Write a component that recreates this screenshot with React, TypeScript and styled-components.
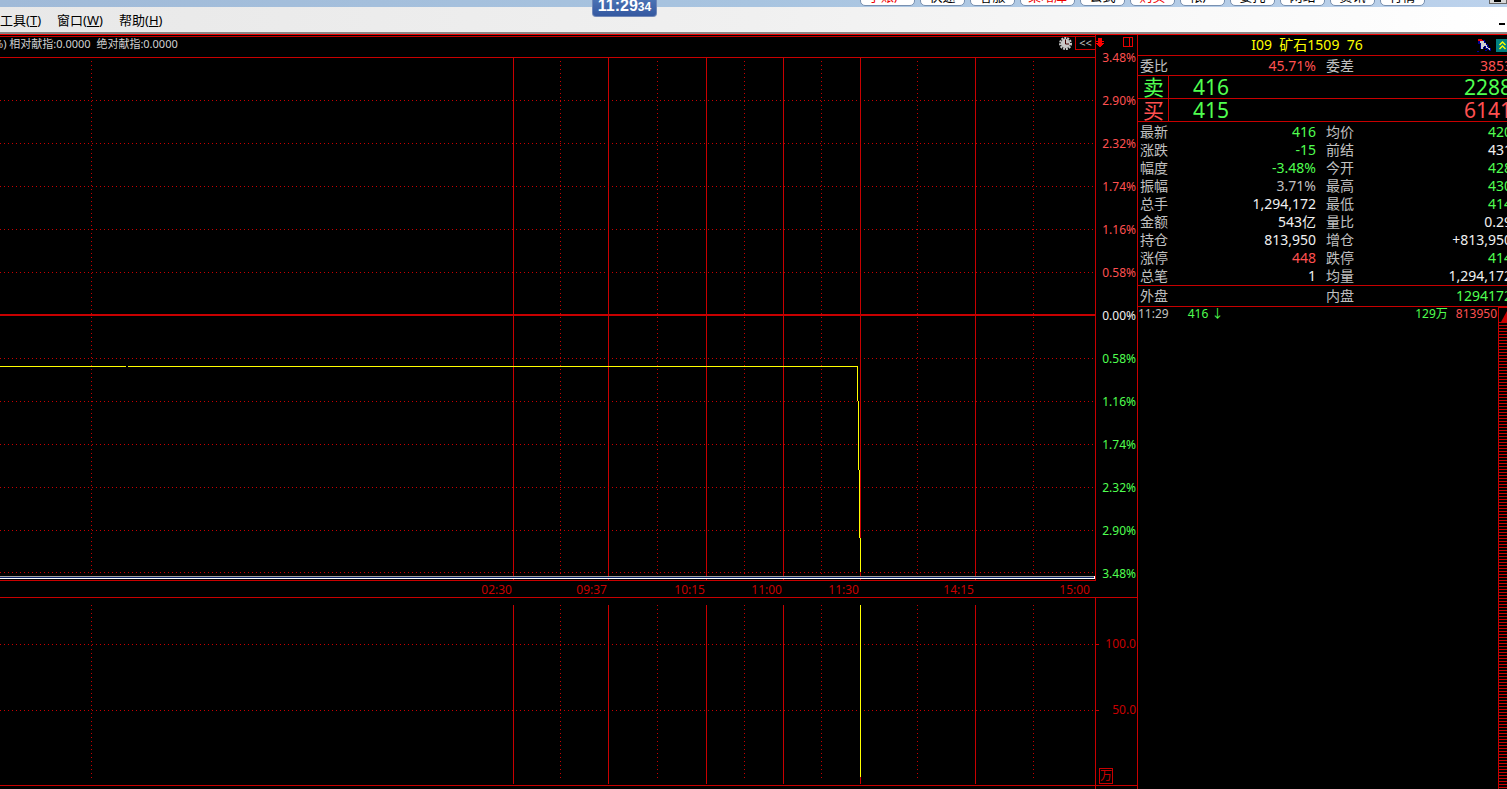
import React from 'react';
import styled, { createGlobalStyle } from 'styled-components';

const RED = '#c80000';
const UP = '#ff5050';
const DOWN = '#50ff50';
const LABEL = '#c0c0c0';
const PLAIN = '#f0f0f0';

const GlobalStyle = createGlobalStyle`
  * { box-sizing: border-box; }
  body {
    margin: 0;
    background: #000;
    overflow: hidden;
    font-family: "Noto Sans", "Noto Sans CJK SC", sans-serif;
  }
  button { font-family: inherit; padding: 0; border: 0; background: none; }
`;

const Page = styled.div`
  display: flex;
  flex-direction: column;
  min-height: 100vh;
  overflow: hidden;
`;

/* ---------- window chrome ---------- */

const TitleStrip = styled.header`
  position: relative;
  display: flex;
  justify-content: flex-end;
  align-items: flex-end;
  gap: 5px;
  height: 7px;
  padding: 0 82px 1px 0;
  background: linear-gradient(90deg, #a0bad8, #a8c4e0 50%, #bcd2ec);
`;

const QuickButton = styled.button<{ $wide?: boolean; $hot?: boolean }>`
  flex: none;
  width: ${(p) => (p.$wide ? 55 : 45)}px;
  height: 20px;
  border: 1px solid #7890b0;
  border-radius: 5px;
  background: #fff;
  color: ${(p) => (p.$hot ? '#f00000' : '#000')};
  font-size: 13px;
  line-height: 18px;
  text-align: center;
`;

const MinimizeCorner = styled.button`
  position: absolute;
  right: 0;
  bottom: 3px;
  width: 18px;
  height: 16px;
  border: 1px solid #666;
  background: #d8d8d8;
  &::after {
    content: '';
    position: absolute;
    left: 4px;
    bottom: 1px;
    width: 7px;
    height: 3px;
    background: #000;
  }
`;

const ClockWidget = styled.time`
  position: absolute;
  z-index: 2;
  left: 592px;
  top: 0;
  display: flex;
  align-items: flex-end;
  justify-content: center;
  width: 65px;
  height: 17px;
  padding-bottom: 3px;
  overflow: hidden;
  border: 1px solid #7088b8;
  border-top: 0;
  border-radius: 0 0 4px 4px;
  background: linear-gradient(#4a72b4, #3458a0);
  color: #fff;
  font-family: "Liberation Sans", sans-serif;
  font-weight: bold;
  font-size: 16px;
  line-height: 14px;
`;

const ClockSeconds = styled.span`
  font-size: 12px;
  line-height: 12px;
`;

const MenuBar = styled.nav`
  display: flex;
  align-items: center;
  gap: 16px;
  height: 25px;
  padding-right: 2px;
  background: linear-gradient(90deg, #e8e8e8, #f0f0f0 50%, #fff);
`;

const MenuItem = styled.button`
  color: #000;
  font-size: 13px;
  line-height: 18px;
  white-space: nowrap;
`;

const ChildMinimize = styled.button`
  width: 6px;
  height: 2px;
  margin: 8px 0 0 auto;
  background: #000;
`;

const ChromeEdge = styled.div`
  height: 3px;
  border-bottom: 1px solid #f00000;
  background: #888;
`;

/* ---------- workspace ---------- */

const Workspace = styled.main`
  display: flex;
  flex: 1;
  background: #000;
`;

const ChartSide = styled.section`
  display: flex;
  flex-direction: column;
  flex: 1;
  min-width: 0;
  border-right: 1px solid ${RED};
`;

const Pane = styled.div`
  display: flex;
`;

const PriceColumn = styled.div`
  flex: 1;
  min-width: 0;
  margin-top: 1px;
  border-top: 1px solid ${RED};
  border-bottom: 1px solid ${RED};
`;

const InfoBar = styled.div`
  display: flex;
  height: 21px;
  border-bottom: 1px solid ${RED};
  color: #d0d0d0;
  font-size: 11px;
  line-height: 14px;
  white-space: pre;
  overflow: hidden;
`;

const InfoText = styled.span`
  margin-left: -6px;
`;

const InfoTools = styled.div`
  display: flex;
  gap: 3px;
  height: 13px;
  margin-left: auto;
`;

const CollapseButton = styled.button`
  width: 20px;
  height: 13px;
  border-left: 1px solid ${RED};
  border-bottom: 1px solid ${RED};
  color: #c0c0c0;
  font-size: 11px;
  line-height: 12px;
`;

const IconButton = styled.button`
  display: block;
  line-height: 0;
`;

const Graph = styled.svg<{ $h: number }>`
  display: block;
  width: 100%;
  height: ${(p) => p.$h}px;
`;

const Axis = styled.aside`
  display: flex;
  flex-direction: column;
  flex: none;
  width: 42px;
  border-left: 1px solid ${RED};
`;

const AxisTools = styled.div`
  display: flex;
  align-items: flex-start;
  justify-content: space-between;
  height: 16px;
  padding: 2px 4px 0 0;
`;

const PercentScale = styled.div`
  display: flex;
  flex: 1;
  flex-direction: column;
  justify-content: space-between;
  padding-right: 1px;
  text-align: right;
  font-size: 12px;
  line-height: 14px;
`;

const Tone = styled.span<{ $c: string }>`
  color: ${(p) => p.$c};
`;

const TimeRow = styled.div`
  display: flex;
  height: 17px;
  padding-right: 47px;
  border-bottom: 1px solid ${RED};
  color: ${RED};
  font-size: 12px;
  line-height: 18px;
  text-align: right;
`;

const TimeMark = styled.span<{ $w: number }>`
  flex: ${(p) => p.$w} 1 0;
`;

const VolumePane = styled(Pane)`
  border-bottom: 1px solid ${RED};
`;

const VolumeColumn = styled.div`
  flex: 1;
  min-width: 0;
`;

const VolumeScale = styled(Axis)`
  padding-top: 39px;
  color: ${RED};
  font-size: 12px;
  line-height: 16px;
`;

const VolumeMark = styled.div`
  display: flex;
  align-items: center;
  justify-content: space-between;
  height: 14px;
  padding-right: 1px;
  & + & {
    margin-top: 52px;
  }
  &::before {
    content: '';
    width: 3px;
    height: 1px;
    background: ${RED};
  }
`;

const UnitBox = styled.div`
  width: 14px;
  height: 16px;
  margin: auto 0 1px 3px;
  border: 1px solid ${RED};
  font-size: 12px;
  line-height: 14px;
  text-align: center;
`;

const Footer = styled.div`
  flex: 1;
  width: calc(100% - 41px);
  border-right: 1px solid ${RED};
`;

/* ---------- quote panel ---------- */

const QuoteSide = styled.section`
  display: flex;
  flex-direction: column;
  flex: none;
  width: 369px;
  overflow: hidden;
`;

const QuoteTitle = styled.div`
  display: flex;
  align-items: center;
  height: 21px;
  border-bottom: 1px solid ${RED};
`;

const QuoteName = styled.h1`
  flex: 1;
  margin: 0;
  color: #ffff00;
  font-size: 14px;
  font-weight: 400;
  line-height: 20px;
  text-align: center;
  white-space: pre;
`;

const TitleTools = styled.div`
  display: flex;
  flex: none;
  gap: 4px;
  width: 31px;
`;

const Stats = styled.table<{ $pad?: number }>`
  flex: none;
  width: 374px;
  table-layout: fixed;
  border-spacing: 0;
  font-size: 14px;
  border-bottom: 1px solid ${RED};
  padding-top: ${(p) => p.$pad ?? 0}px;
`;

const StatRow = styled.tr<{ $h: number }>`
  height: ${(p) => p.$h}px;
  line-height: ${(p) => p.$h}px;
`;

const StatLabel = styled.th<{ $second?: boolean }>`
  width: ${(p) => (p.$second ? 40 : 38)}px;
  padding: 0 0 0 ${(p) => (p.$second ? 10 : 2)}px;
  color: ${LABEL};
  font-weight: 400;
  text-align: left;
  white-space: nowrap;
`;

const StatValue = styled.td<{ $c: string; $first?: boolean }>`
  width: ${(p) => (p.$first ? '140px' : 'auto')};
  padding: 0;
  color: ${(p) => p.$c};
  text-align: right;
  white-space: nowrap;
`;

const DealRow = styled.div`
  display: flex;
  flex: none;
  width: 374px;
  height: 23px;
  border-bottom: 1px solid ${RED};
  font-size: 21px;
  line-height: 22px;
`;

const DealSide = styled.span<{ $c: string }>`
  width: 31px;
  padding-left: 5px;
  border-right: 1px solid ${RED};
  color: ${(p) => p.$c};
`;

const DealPrice = styled.span`
  flex: 1;
  padding-left: 24px;
  color: ${DOWN};
`;

const TickArea = styled.div`
  display: flex;
  flex: 1;
`;

const TickRow = styled.div`
  display: flex;
  flex: 1;
  height: 16px;
  color: ${LABEL};
  font-size: 12px;
  line-height: 14px;
`;

const TickPrice = styled.span`
  flex: 1;
  padding-left: 19px;
  color: ${DOWN};
  white-space: pre;
`;

const TickVolume = styled.span`
  padding-right: 8px;
  color: ${DOWN};
`;

const TickOpen = styled.span`
  padding-right: 1px;
  color: ${UP};
`;

const ScrollTrack = styled.div`
  display: flex;
  flex-direction: column;
  width: 9px;
  overflow: hidden;
  border-left: 1px solid ${RED};
`;

const ScrollUp = styled.button`
  height: 15px;
  padding: 2px 0 0 2px;
  border-top: 1px solid ${RED};
  line-height: 0;
`;

const ScrollStripes = styled.div`
  flex: 1;
  background: repeating-linear-gradient(${RED} 0 1px, #000 1px 3px);
`;

/* ---------- data ---------- */

const quick: [string, boolean, boolean][] = [
  ['子账户', true, true],
  ['快速', false, false],
  ['客服', false, false],
  ['策略库', true, true],
  ['公式', false, false],
  ['购买', false, true],
  ['帐户', false, false],
  ['委托', false, false],
  ['网站', false, false],
  ['资讯', false, false],
  ['行情', false, false],
];

const menus = [
  ['工具', 'T'],
  ['窗口', 'W'],
  ['帮助', 'H'],
];

const solidX = [513, 608, 706, 783, 860, 975];
const dottedX = [91, 560, 657, 744, 821, 917, 1033];
const levels = [42, 85, 128, 171, 214, 300, 343, 386, 429, 472, 514];

const percents = ['3.48%', '2.90%', '2.32%', '1.74%', '1.16%', '0.58%', '0.00%',
  '0.58%', '1.16%', '1.74%', '2.32%', '2.90%', '3.48%'];

const times: [string, number][] = [
  ['02:30', 512], ['09:37', 95], ['10:15', 98], ['11:00', 77],
  ['11:30', 77], ['14:15', 115], ['15:00', 116],
];

const stats: [string, string, string, string, string, string][] = [
  ['最新', '416', DOWN, '均价', '420', DOWN],
  ['涨跌', '-15', DOWN, '前结', '431', PLAIN],
  ['幅度', '-3.48%', DOWN, '今开', '428', DOWN],
  ['振幅', '3.71%', LABEL, '最高', '430', DOWN],
  ['总手', '1,294,172', PLAIN, '最低', '414', DOWN],
  ['金额', '543亿', PLAIN, '量比', '0.29', PLAIN],
  ['持仓', '813,950', PLAIN, '增仓', '+813,950', PLAIN],
  ['涨停', '448', UP, '跌停', '414', DOWN],
  ['总笔', '1', PLAIN, '均量', '1,294,172', PLAIN],
];

/* ---------- drawings ---------- */

function VerticalRules({ top, bottom, dotTop }: { top: number; bottom: number; dotTop: number }) {
  return (
    <g>
      {dottedX.map((x) => (
        <path key={x} d={`M${x + 0.5} ${dotTop}V${bottom - 3}`} stroke={RED} strokeDasharray="1 3" />
      ))}
      {solidX.map((x) => (
        <path key={x} d={`M${x + 0.5} ${top}V${bottom}`} stroke={RED} />
      ))}
    </g>
  );
}

function PriceGraph() {
  return (
    <Graph $h={522} viewBox="0 0 1095 522" preserveAspectRatio="none" shapeRendering="crispEdges" fill="none">
      {levels.map((y) => (
        <path key={y} d={`M0 ${y + 0.5}H1095`} stroke={RED} strokeDasharray="1 3" />
      ))}
      <VerticalRules top={0} bottom={522} dotTop={3} />
      <path d="M0 257H1095" stroke={RED} strokeWidth="2" />
      <path
        d="M0 308.5H126M128 308.5H858M857.5 308V343M858.5 343V412M859.5 412V480M860.5 480V514"
        stroke="#ffff00"
      />
      <path d="M0 518.5H1095" stroke="#a0a0a0" />
      <path d="M0 519.5H1095" stroke="#0a246a" />
      <path d="M0 520.5H1095M1094.5 518V521" stroke="#fff" />
    </Graph>
  );
}

function VolumeGraph() {
  return (
    <Graph $h={187} viewBox="0 0 1095 187" preserveAspectRatio="none" shapeRendering="crispEdges" fill="none">
      <path d="M0 46.5H1095M0 112.5H1095" stroke={RED} strokeDasharray="1 3" />
      <VerticalRules top={7} bottom={186} dotTop={7} />
      <path d="M860.5 7V179" stroke="#ffff00" />
    </Graph>
  );
}

function ClockIcon() {
  return (
    <svg width="13" height="13" viewBox="0 0 13 13">
      <circle cx="6.5" cy="6.5" r="5.5" fill="none" stroke="#c8c8c8" strokeWidth="2" strokeDasharray="2 1" />
      <circle cx="6.5" cy="6.5" r="4.7" fill="#c8c8c8" />
      <path d="M6.5 2.5V7H10" fill="none" stroke="#400000" strokeWidth="1" />
    </svg>
  );
}

function AnchorIcon() {
  return (
    <svg width="9" height="10" viewBox="0 0 9 10" shapeRendering="crispEdges" fill="#ff0000">
      <path d="M2 1h4v3h2v1h-2v1h2v1h-1v1h-1v1h-1v1h-2v-1h-1v-1h-1v-1h-1v-1h2v-1h-2v-1h2z" />
    </svg>
  );
}

function SplitIcon() {
  return (
    <svg width="10" height="10" viewBox="0 0 10 10" shapeRendering="crispEdges" fill="none" stroke="#e80000">
      <path d="M.5 .5h9v9h-9zM6.5 .5v9" />
    </svg>
  );
}

function ToolIcon() {
  return (
    <svg width="16" height="14" viewBox="0 0 16 14" shapeRendering="crispEdges">
      <path d="M2 2h7v2h1v2h2v2h1v2h2v3h-2v-1h-2v-1H9V9H8v2H4V6H2z" fill="#000090" />
      <path d="M4 3h4v2h2v2h1v2h1v1h2v2h-1v-1h-1v-1h-2V8H8v1H7v2H5V5H4z" fill="#d0d0d0" />
      <path d="M2 1h4v1h1v1H2z" fill="#f00000" />
      <path d="M1 13h2v1H1zM9 12h2v1H9z" fill="#000090" />
    </svg>
  );
}

function ExpandIcon() {
  return (
    <svg width="13" height="13" viewBox="0 0 13 13">
      <path d="M0 0h13v13H0z" fill="#008080" />
      <path d="M3.5 6L6.5 3L9.5 6M3.5 10L6.5 7L9.5 10" fill="none" stroke="#ffff00" strokeWidth="1.4" />
    </svg>
  );
}

/* ---------- page ---------- */

export default function App() {
  return (
    <Page>
      <GlobalStyle />
      <TitleStrip>
        <ClockWidget>
          11:29<ClockSeconds>34</ClockSeconds>
        </ClockWidget>
        {quick.map(([name, wide, hot]) => (
          <QuickButton key={name} $wide={wide} $hot={hot}>{name}</QuickButton>
        ))}
        <MinimizeCorner aria-label="最小化" />
      </TitleStrip>
      <MenuBar>
        {menus.map(([name, key]) => (
          <MenuItem key={key}>{name}(<u>{key}</u>)</MenuItem>
        ))}
        <ChildMinimize aria-label="最小化子窗口" />
      </MenuBar>
      <ChromeEdge />

      <Workspace>
        <ChartSide>
          <Pane>
            <PriceColumn>
              <InfoBar>
                <InfoText>%) 相对献指:0.0000  绝对献指:0.0000</InfoText>
                <InfoTools>
                  <IconButton aria-label="时间"><ClockIcon /></IconButton>
                  <CollapseButton>&lt;&lt;</CollapseButton>
                </InfoTools>
              </InfoBar>
              <PriceGraph />
            </PriceColumn>
            <Axis>
              <AxisTools>
                <IconButton aria-label="固定"><AnchorIcon /></IconButton>
                <IconButton aria-label="分栏"><SplitIcon /></IconButton>
              </AxisTools>
              <PercentScale>
                {percents.map((p, i) => (
                  <Tone key={i} $c={i < 6 ? UP : i === 6 ? PLAIN : DOWN}>{p}</Tone>
                ))}
              </PercentScale>
            </Axis>
          </Pane>
          <TimeRow>
            {times.map(([t, w]) => (
              <TimeMark key={t} $w={w}>{t}</TimeMark>
            ))}
          </TimeRow>
          <VolumePane>
            <VolumeColumn><VolumeGraph /></VolumeColumn>
            <VolumeScale>
              <VolumeMark>100.0</VolumeMark>
              <VolumeMark>50.0</VolumeMark>
              <UnitBox>万</UnitBox>
            </VolumeScale>
          </VolumePane>
          <Footer />
        </ChartSide>

        <QuoteSide>
          <QuoteTitle>
            <QuoteName>I09  矿石1509  76</QuoteName>
            <TitleTools>
              <IconButton aria-label="工具"><ToolIcon /></IconButton>
              <IconButton aria-label="展开"><ExpandIcon /></IconButton>
            </TitleTools>
          </QuoteTitle>
          <Stats>
            <tbody>
              <StatRow $h={19}>
                <StatLabel>委比</StatLabel>
                <StatValue $first $c={UP}>45.71%</StatValue>
                <StatLabel $second>委差</StatLabel>
                <StatValue $c={UP}>3853</StatValue>
              </StatRow>
            </tbody>
          </Stats>
          <DealRow>
            <DealSide $c={DOWN}>卖</DealSide>
            <DealPrice>416</DealPrice>
            <Tone $c={DOWN}>2288</Tone>
          </DealRow>
          <DealRow>
            <DealSide $c={UP}>买</DealSide>
            <DealPrice>415</DealPrice>
            <Tone $c={UP}>6141</Tone>
          </DealRow>
          <Stats $pad={1}>
            <tbody>
              {stats.map(([a, av, ac, b, bv, bc]) => (
                <StatRow key={a} $h={18}>
                  <StatLabel>{a}</StatLabel>
                  <StatValue $first $c={ac}>{av}</StatValue>
                  <StatLabel $second>{b}</StatLabel>
                  <StatValue $c={bc}>{bv}</StatValue>
                </StatRow>
              ))}
            </tbody>
          </Stats>
          <Stats>
            <tbody>
              <StatRow $h={20}>
                <StatLabel>外盘</StatLabel>
                <StatValue $first $c={UP} />
                <StatLabel $second>内盘</StatLabel>
                <StatValue $c={DOWN}>1294172</StatValue>
              </StatRow>
            </tbody>
          </Stats>
          <TickArea>
            <TickRow>
              <span>11:29</span>
              <TickPrice>416 ↓</TickPrice>
              <TickVolume>129万</TickVolume>
              <TickOpen>813950</TickOpen>
            </TickRow>
            <ScrollTrack>
              <ScrollUp aria-label="向上滚动">
                <svg width="12" height="11" viewBox="0 0 12 11"><path d="M6 0L12 11H0z" fill={RED} /></svg>
              </ScrollUp>
              <ScrollStripes />
            </ScrollTrack>
          </TickArea>
        </QuoteSide>
      </Workspace>
    </Page>
  );
}
